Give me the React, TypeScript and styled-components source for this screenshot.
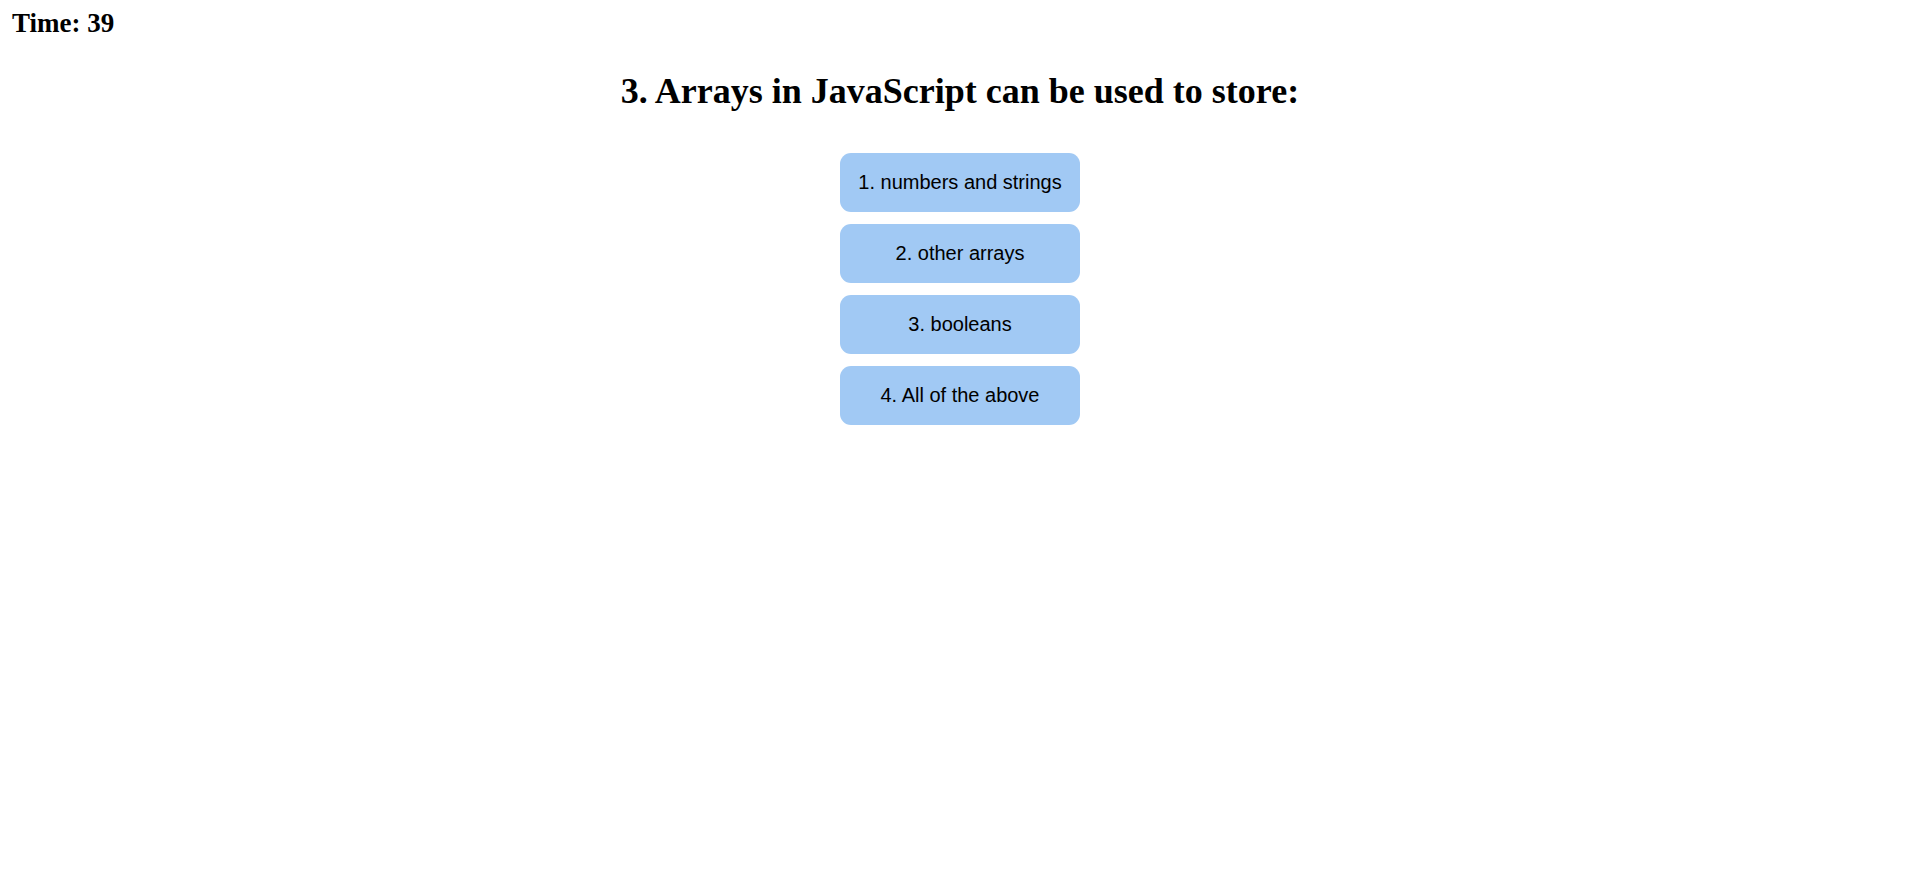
import styled, { createGlobalStyle } from "styled-components";

const GlobalStyle = createGlobalStyle`
  body {
    margin: 0;
    font-family: "Liberation Serif", "Times New Roman", serif;
    font-size: 18px;
    color: #000;
    background: #fff;
  }
`;

const Page = styled.div`
  padding: 8px 12px;
`;

const Timer = styled.h2`
  margin: 0;
  font-size: 27px;
  font-weight: bold;
`;

const Question = styled.h1`
  margin: 31px 0 41px;
  text-align: center;
  font-size: 36px;
  font-weight: bold;
`;

const Options = styled.div`
  display: flex;
  flex-direction: column;
  align-items: center;
  gap: 12px;
`;

const Option = styled.button`
  width: 240px;
  height: 59px;
  display: flex;
  align-items: center;
  justify-content: center;
  border: none;
  border-radius: 11px;
  background: #a1c9f4;
  color: #000;
  font-family: "Liberation Sans", Arial, sans-serif;
  font-size: 20px;
  cursor: pointer;
`;

const answers = [
  "numbers and strings",
  "other arrays",
  "booleans",
  "All of the above",
];

function App() {
  return (
    <>
      <GlobalStyle />
      <Page>
        <Timer>Time: 39</Timer>
        <Question>3. Arrays in JavaScript can be used to store:</Question>
        <Options>
          {answers.map((a, i) => (
            <Option key={i}>
              {i + 1}. {a}
            </Option>
          ))}
        </Options>
      </Page>
    </>
  );
}

export default App;
